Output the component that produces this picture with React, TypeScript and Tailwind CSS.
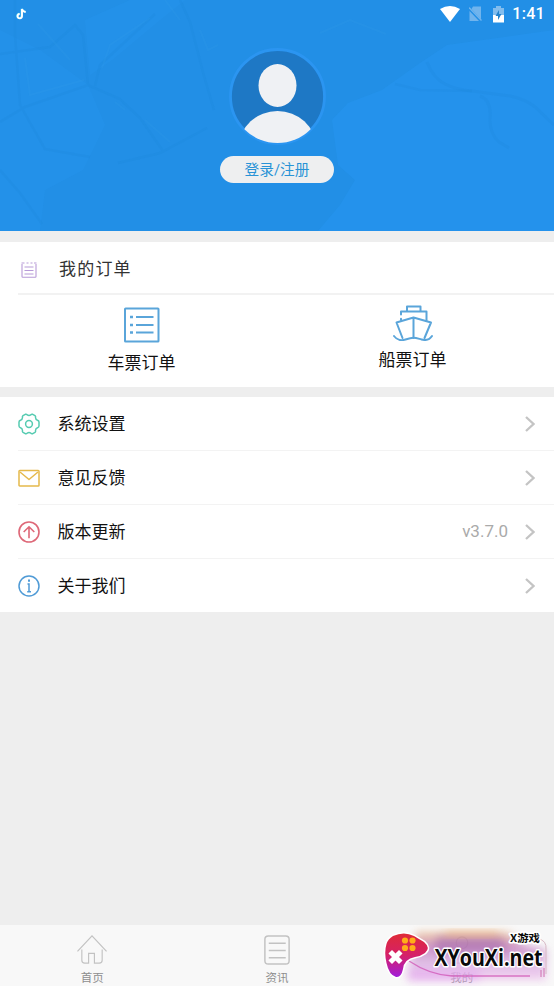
import type { ReactNode } from 'react';

const orders = [
  { label: '车票订单', icon: <TicketIcon /> },
  { label: '船票订单', icon: <ShipIcon /> },
];

const settings = [
  { label: '系统设置', icon: <GearIcon /> },
  { label: '意见反馈', icon: <MailIcon /> },
  { label: '版本更新', icon: <UpdateIcon />, value: 'v3.7.0' },
  { label: '关于我们', icon: <InfoIcon /> },
];

function TicketIcon() {
  return (
    <svg className="mt-3 h-9 w-9" viewBox="0 0 36 36" fill="none" stroke="#5aa5da" strokeWidth="2">
      <rect x="1" y="1.5" width="33.5" height="33" rx="0.6" />
      <path d="M12 10h17.5M12 18h17.5M12 25.5h17.5" strokeWidth="1.8" />
      <path d="M6 10h3M6 18h3M6 25.5h3" strokeWidth="2.4" />
    </svg>
  );
}

function ShipIcon() {
  return (
    <svg className="mt-2.5 h-9 w-10" viewBox="0 0 40 36" fill="none" stroke="#5aa5da" strokeWidth="2" strokeLinejoin="round" strokeLinecap="round">
      <path d="M14 5.500V1.500h13.500V6.500M8 9.500V6.500h25.500V15.500M8 13.700V15" />
      <path d="M20.500 12.500 3.500 17.500l6 15.500M20.500 12.500 38 17.500l-6.500 15.500M20.500 12.500v20.500" />
      <path d="M1 31C4 35 8 36 12.500 34.500S18 32.700 20.500 32.700S25 33.500 28.500 34.500S36 35.500 39 31" />
    </svg>
  );
}

function GearIcon() {
  return (
    <svg className="h-[22px] w-[22px]" viewBox="0 0 22 22" fill="none" stroke="#56cbb1" strokeWidth="1.5" strokeLinejoin="round">
      <path d="M7.300 1.300Q8.500 .9 9.200 1.900Q11 3 12.800 1.900Q13.500 .9 14.700 1.300L17 2.700Q17.900 3.400 17.500 4.500Q17.600 6.600 19.500 7.300Q20.900 7.700 21 9V13Q20.900 14.300 19.500 14.700Q17.600 15.400 17.500 17.500Q17.900 18.600 17 19.300L14.700 20.700Q13.500 21.100 12.800 20.100Q11 19 9.200 20.100Q8.500 21.100 7.300 20.700L5 19.300Q4.100 18.600 4.500 17.500Q4.400 15.400 2.500 14.700Q1.100 14.300 1 13V9Q1.100 7.700 2.500 7.300Q4.400 6.600 4.500 4.500Q4.100 3.400 5 2.700Z" />
      <circle cx="11" cy="11" r="3.400" />
    </svg>
  );
}

function MailIcon() {
  return (
    <svg className="h-[22px] w-[22px]" viewBox="0 0 22 22" fill="none" stroke="#e5b94b" strokeWidth="1.5" strokeLinejoin="round">
      <rect x="1" y="3.500" width="20" height="15.500" rx="0.800" />
      <path d="m2 5 9 7.500L20 5" />
    </svg>
  );
}

function UpdateIcon() {
  return (
    <svg className="h-[22px] w-[22px]" viewBox="0 0 22 22" fill="none" stroke="#de6878" strokeWidth="1.600">
      <circle cx="11" cy="11" r="10" />
      <path d="M11 17.200V6M5.700 11 11 5.800 16.300 11" />
    </svg>
  );
}

function InfoIcon() {
  return (
    <svg className="h-[22px] w-[22px]" viewBox="0 0 22 22" fill="none" stroke="#509bd6" strokeWidth="1.500">
      <circle cx="11" cy="11" r="10" />
      <path d="M11 4.500v2.300" strokeWidth="2" />
      <path d="M9.500 9H11v7.800M9.200 16.800h3.800" strokeWidth="1.500" />
    </svg>
  );
}

function Chevron() {
  return (
    <svg className="h-4 w-2.5" viewBox="0 0 10 16" fill="none" stroke="#c4c4c4" strokeWidth="2.300">
      <path d="m1 1 7.500 7L1 15" />
    </svg>
  );
}

// Faint street map behind the profile
function MapBackground() {
  return (
    <svg className="absolute inset-0 h-full w-full" viewBox="0 0 554 231" fill="none">
      <path d="M554 0V231H318L340 205 355 180 338 165 332 120 348 103 382 90 420 63 447 45 554 30Z" fill="#2593ec" fillOpacity=".85" />
      <path d="M0 30 40 50 88 85 105 125 83 170 45 190 40 231H0ZM85 20 130 0H185L160 20 112 60 90 75Z" fill="#2592eb" fillOpacity=".6" />
      <g stroke="#1b80d2" strokeOpacity=".16" strokeWidth="2.500">
        <path d="M0 122 25 107 88 85 120 99 140 118 163 151M15 0V35L20 105 45 149 90 157M0 54 50 47 75 25 83 35 88 85M95 86 100 65 155 14M118 163 160 153 207 128M180 0 190 22 204 76 214 110M0 170 20 193 42 224" />
        <path d="M427 62Q433 78 445 84T472 91L510 96Q525 99 535 107L554 125M480 96Q492 100 490 120Q490 134 499 142L509 148" strokeWidth="3" />
        <path d="m395 84 25 6 52 1" />
      </g>
      <g stroke="#39a0ed" strokeOpacity=".14" strokeWidth="2">
        <path d="M25 58 30 95 84 80M38 24 70 60M102 68 110 45 150 18M145 120 170 142M115 102 125 110M200 30 208 50 218 45M165 0 180 20M320 33 350 20 386 34" />
      </g>
    </svg>
  );
}

function StatusBar() {
  return (
    <div className="flex h-7 w-full items-center justify-between pl-4 pr-[9px]">
      <svg className="h-3 w-[11px]" viewBox="0 0 11 12">
        <path d="M6 1v7a2.200 2.200 0 1 1-2.300-2M6 1q.8 2.700 3.700 3" fill="none" stroke="#77e5ed" strokeWidth="1.800" transform="translate(-.4 -.3)" />
        <path d="M6 1v7a2.200 2.200 0 1 1-2.300-2M6 1q.8 2.700 3.700 3" fill="none" stroke="#fff" strokeWidth="1.900" />
      </svg>
      <div className="flex items-center">
        <svg className="mr-[9px] h-4 w-5" viewBox="0 0 20 16" fill="#fff">
          <path d="M0 3Q10-3 20 3L10 16Z" />
        </svg>
        <svg className="mr-[11px] h-4 w-[13px]" viewBox="0 0 13 16">
          <path d="M4 .5h8v13L2.500 3ZM.5 5 10 15H.5Z" fill="#70b4ed" />
          <path d="m0 1.500 12.500 13" stroke="#70b4ed" strokeWidth="1.300" />
        </svg>
        <svg className="mr-2 h-[17px] w-[11px]" viewBox="0 0 11 17">
          <path d="M0 2h3V0h5v2h3v7H0Z" fill="#82bdee" />
          <path d="M0 9h11v7.500H0Z" fill="#fff" />
          <path d="M6 4 2.500 10H5v4l3.500-6H6Z" fill="#2483cd" />
        </svg>
        <span className="font-[Roboto] text-base font-medium leading-7 tracking-[0.3px] text-white">1:41</span>
      </div>
    </div>
  );
}

function Profile() {
  return (
    <header className="relative h-[231px] bg-[#228fe6]">
      <MapBackground />
      <div className="relative flex flex-col items-center">
        <StatusBar />
        <svg className="mt-5 h-[97px] w-[97px]" viewBox="0 0 97 97">
          <defs>
            <clipPath id="avatar">
              <circle cx="48.500" cy="48.500" r="46.500" />
            </clipPath>
          </defs>
          <circle cx="48.500" cy="48.500" r="47" fill="#1e78c5" stroke="#2b95f1" strokeWidth="2.800" />
          <ellipse cx="48.500" cy="37.500" rx="19" ry="21.500" fill="#eff1f4" />
          <ellipse cx="48.500" cy="98" rx="38" ry="35" fill="#eff1f4" clipPath="url(#avatar)" />
        </svg>
        <button className="mt-[11px] h-[27px] w-[114px] rounded-full bg-[#eeeff0] pt-px text-[14.700px] leading-[27px] text-[#2993d6]">
          登录/注册
        </button>
      </div>
    </header>
  );
}

function Tab({ label, children }: { label: string; children: ReactNode }) {
  return (
    <div className="flex flex-1 flex-col items-center text-[11.500px] leading-[16px] text-[#8e8e8e]">
      <svg className="mb-[5px] mt-[9px] h-8 w-8" viewBox="0 0 32 32" fill="none" stroke="#c2c2c2" strokeWidth="1.200">
        {children}
      </svg>
      {label}
    </div>
  );
}

function TabBar() {
  return (
    <nav className="mt-auto flex h-[61px] bg-[#f8f8f8]">
      <Tab label="首页">
        <path d="m1 18 15-16 15 16M5.500 16v11q0 3 3 3h4V20h6v10h5q3 0 3-3V16" />
      </Tab>
      <Tab label="资讯">
        <rect x="3.500" y="2" width="25" height="29" rx="3.500" strokeWidth="1.500" />
        <path d="M7.500 9.500h17.500M7.500 17h17.500M7.500 24.500h17.500" strokeWidth="1.500" />
      </Tab>
      <Tab label="我的">
        <circle cx="16" cy="9" r="6" />
        <path d="M4 30q0-12 12-12t12 12Z" />
      </Tab>
    </nav>
  );
}

function SiteLogo() {
  return (
    <svg className="absolute bottom-0 right-0 h-[61px] w-[184px]" viewBox="0 0 184 61">
      <defs>
        <linearGradient id="pad" x2="0" y2="1">
          <stop stopColor="#df2b38" />
          <stop offset=".5" stopColor="#d52068" />
          <stop offset="1" stopColor="#a11dda" />
        </linearGradient>
        <linearGradient id="haze" x2="0" y2="1">
          <stop stopColor="#efc58d" />
          <stop offset=".3" stopColor="#c27bbd" />
          <stop offset=".68" stopColor="#dcb4e4" />
          <stop offset="1" stopColor="#efc2ed" />
        </linearGradient>
        <filter id="soft" x="-20%" y="-50%" width="140%" height="200%">
          <feGaussianBlur stdDeviation="4" />
        </filter>
      </defs>
      <path d="M46 7H138L154 20 176 25V55H36L43 23Z" fill="url(#haze)" opacity=".8" filter="url(#soft)" />
      <path d="M67 12H131L138 27H64Z" fill="#9c5fa8" opacity=".5" filter="url(#soft)" />
      <path d="M75 6H128V11H75Z" fill="#efaa62" opacity=".5" filter="url(#soft)" />
      <path d="M39 45H110V56H39Z" fill="#dc8af0" opacity=".35" filter="url(#soft)" />
      <path d="M39 36Q60 50 82 51H160" fill="none" stroke="#cf4cb1" strokeWidth="1.400" strokeOpacity=".7" />
      <path d="M168 14Q177 15 176 25V49" fill="none" stroke="#d8b9c6" strokeWidth="1" />
      <path d="M171 45v7M174 43v9" stroke="#ce6fae" strokeWidth="1" />
      <path d="M23 11Q34 6 44 11L54 17Q61 23 55 28Q51 31 45 32Q34 34 33 44Q31 53 26 52Q19 50 16.500 38Q14 27 16.500 19Q18 14 23 11Z" fill="url(#pad)" stroke="#fff" strokeWidth="3" paintOrder="stroke" />
      <g fill="#ffad19">
        <circle cx="35" cy="15.500" r="3.100" />
        <circle cx="42.500" cy="15.500" r="3.100" />
        <circle cx="35" cy="23" r="3.100" />
        <circle cx="42.500" cy="23" r="3.100" />
      </g>
      <path d="m22 28.500 7 7m0-7-7 7" stroke="#fff" strokeWidth="5" strokeLinecap="square" />
      <g fill="#090909" stroke="#fff" strokeWidth="3" strokeLinejoin="round" paintOrder="stroke" fontWeight="700">
        <text x="64.500" y="41" fontSize="24" textLength="108" lengthAdjust="spacingAndGlyphs" className="font-['Open_Sans']">XYouXi.net</text>
        <text x="140" y="17" fontSize="10.500" textLength="30" lengthAdjust="spacingAndGlyphs" className="font-['Noto_Sans_CJK_SC']">X游戏</text>
      </g>
    </svg>
  );
}

export default function App() {
  return (
    <div className="relative flex h-[986px] w-[554px] flex-col overflow-hidden bg-[#eeeeee] font-[Roboto,'Noto_Sans_CJK_SC',sans-serif] text-[#111111]">
      <Profile />

      <section className="mt-[11px] h-[145px] bg-white">
        <div className="flex h-[51px] items-center pl-[21px]">
          <svg className="mt-1 h-4 w-4" viewBox="0 0 16 16" fill="none" stroke="#b89bd8" strokeWidth="1.100">
            <path d="M1 2v12.500q0 .7.700.7h12.600q.7 0 .7-.7V2M0.500 1h3M5.500 1h2M9.500 1h2M13 1h2.500M3.500 5h9M3.500 8.500h9M3.500 12h9" />
          </svg>
          <h2 className="ml-[22px] mt-[5px] text-[17px] tracking-[1.200px] text-[#333333]">我的订单</h2>
        </div>
        <div className="ml-[18px] grid grid-cols-2 border-t-2 border-[#f2f2f2]">
          {orders.map((order, i) => (
            <div key={order.label} className={i === 0 ? 'flex flex-col items-center pr-[21px]' : 'flex flex-col items-center pr-[15px]'}>
              {order.icon}
              <span className={i === 0 ? 'mt-2 text-[17px] leading-6' : 'mt-[7px] text-[17px] leading-6'}>{order.label}</span>
            </div>
          ))}
        </div>
      </section>

      <section className="mt-2.5 flex h-[215px] flex-col bg-white pl-[18px]">
        {settings.map((item) => (
          <div key={item.label} className="flex flex-1 items-center border-b border-[#f3f3f3] pr-[19px] last:border-b-0">
            {item.icon}
            <span className="ml-[17.500px] text-[17px] leading-6">{item.label}</span>
            <div className="ml-auto flex items-center gap-[17px]">
              {item.value && <span className="text-[17px] text-[#aaaaaa]">{item.value}</span>}
              <Chevron />
            </div>
          </div>
        ))}
      </section>

      <TabBar />
      <SiteLogo />
    </div>
  );
}
